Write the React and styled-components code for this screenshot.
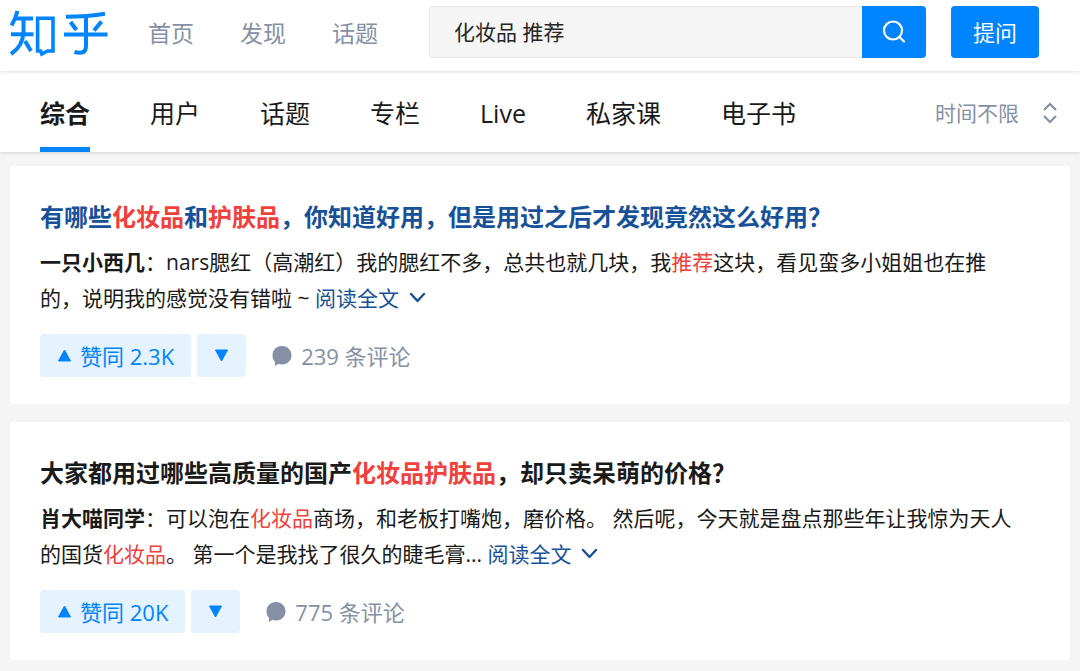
import React from "react";
import styled, { createGlobalStyle } from "styled-components";

const GlobalStyle = createGlobalStyle`
  * { box-sizing: border-box; }
  body {
    margin: 0;
    background: #f5f5f5;
    color: #1a1a1a;
    font-family: "Open Sans", "Noto Sans CJK SC", sans-serif;
    font-size: 21px;
    line-height: 36px;
  }
  button, input, select { font: inherit; }
  a { color: inherit; text-decoration: none; }
  svg { display: block; flex: none; }
`;

const Header = styled.header`
  position: relative;
  z-index: 1;
  display: flex;
  align-items: center;
  height: 71px;
  padding: 0 41px 7px 9px;
  background: #fff;
  box-shadow: 0 1px 3px rgba(26, 26, 26, 0.14);
`;

const LogoLink = styled.a`
  padding-top: 1px;
`;

const Nav = styled.nav`
  display: flex;
  gap: 46px;
  margin: 2px 51px 0 39px;
  font-size: 23px;
  color: #8590a6;
  white-space: nowrap;
`;

const SearchForm = styled.form`
  display: flex;
  flex: 1;
  min-width: 0;
  height: 52px;
`;

const SearchInput = styled.input`
  flex: 1;
  min-width: 0;
  padding: 0 24px;
  border: 1px solid #e8e8e8;
  border-right: 0;
  border-radius: 4px 0 0 4px;
  background: #f5f5f5;
  color: #262626;
  outline: none;
`;

const PrimaryButton = styled.button`
  display: flex;
  align-items: center;
  justify-content: center;
  width: ${(p) => p.$width}px;
  height: 52px;
  padding: 0;
  border: 0;
  border-radius: ${(p) => (p.$attached ? "0 4px 4px 0" : "4px")};
  background: #0084ff;
  color: #fff;
  font-size: 22px;
  cursor: pointer;
`;

const AskWrap = styled.div`
  margin-left: 25px;
`;

const TabBar = styled.div`
  display: flex;
  align-items: center;
  justify-content: space-between;
  height: 81px;
  padding: 0 22px 0 40px;
  background: #fff;
  box-shadow: 0 1px 3px rgba(26, 26, 26, 0.16);
`;

const Tabs = styled.nav`
  display: flex;
  gap: 60px;
  height: 81px;
  font-size: 25px;
  white-space: nowrap;
`;

const Tab = styled.a`
  padding-top: 24px;
  border-bottom: 5px solid ${(p) => (p.$active ? "#0084ff" : "transparent")};
  font-weight: ${(p) => (p.$active ? 700 : 400)};
`;

const TimeFilter = styled.label`
  display: flex;
  align-items: center;
  gap: 23px;
  padding-top: 2px;
  color: #8590a6;
`;

const TimeSelect = styled.select`
  appearance: none;
  height: 36px;
  padding: 0;
  border: 0;
  background: transparent;
  color: inherit;
`;

const Results = styled.main`
  display: flex;
  flex-direction: column;
  gap: 18px;
  padding: 14px 10px 11px;
`;

const Card = styled.article`
  padding: 29px 30px 27px;
  border-radius: 3px;
  background: #fff;
`;

const Title = styled.h2`
  margin: 0 0 5px;
  font-size: 24px;
  font-weight: 700;
  line-height: 44px;
  color: ${(p) => (p.$visited ? "#1a1a1a" : "#175199")};
`;

const Mark = styled.em`
  font-style: normal;
  color: #f1403c;
`;

const Excerpt = styled.p`
  margin: 0 0 18px;
  padding-right: 20px;
`;

const ReadMore = styled.a`
  display: inline-flex;
  align-items: center;
  gap: 10px;
  color: #175199;
  vertical-align: top;
`;

const Actions = styled.div`
  display: flex;
  align-items: center;
  gap: 6px;
  font-size: 22px;
`;

const VoteButton = styled.button`
  display: flex;
  align-items: center;
  gap: 8px;
  height: 43px;
  padding: 0 17px;
  border: 0;
  border-radius: 4px;
  background: #e5f2ff;
  color: #0084ff;
  cursor: pointer;
`;

const CommentButton = styled.button`
  display: flex;
  align-items: center;
  gap: 9px;
  margin-left: 20px;
  padding: 0;
  border: 0;
  background: transparent;
  color: #8590a6;
  cursor: pointer;
`;

const Logo = () => (
  <svg width="100" height="48" viewBox="9 8 100 48" fill="none" stroke="#0084ff" strokeWidth="4" role="img" aria-label="知乎">
    <path d="M17.5 10 Q15.5 18 11.5 24.5" />
    <path d="M15 17.5 H33" />
    <path d="M11 33.3 H33.5" />
    <path d="M23.5 17.5 V31 Q23 45 11 53" />
    <path d="M25 40 L31 50" />
    <path d="M37.6 17.3 H53 V50 H47.5 L41.8 53 L40.6 50 H37.6 Z" strokeWidth="3.6" />
    <path d="M66 15.8 Q88 15.6 105 12.8" />
    <path d="M70.5 21 L76.5 29" />
    <path d="M101.5 20.5 L94 29.5" />
    <path d="M64 33.5 H107.5" />
    <path d="M86 15 V45 Q86 51.7 80 51.7 Q77 51.7 74.5 51" />
  </svg>
);

const SearchIcon = () => (
  <svg width="24" height="24" viewBox="0 0 24 24" fill="none" stroke="#fff" strokeWidth="2.2" strokeLinecap="round" aria-hidden="true">
    <circle cx="11" cy="10.5" r="9" />
    <path d="M17.5 17 L22 21.5" />
  </svg>
);

const SortIcon = () => (
  <svg width="16" height="22" viewBox="0 0 16 22" fill="none" stroke="#8590a6" strokeWidth="2.2" aria-hidden="true">
    <path d="M2 8 L8 2 L14 8 M2 14 L8 20 L14 14" />
  </svg>
);

const ChevronIcon = () => (
  <svg width="17" height="12" viewBox="0 0 17 12" fill="none" stroke="#175199" strokeWidth="2.4" strokeLinecap="round" strokeLinejoin="round" aria-hidden="true">
    <path d="M2 2 L8.5 9 L15 2" />
  </svg>
);

const Triangle = ({ down }) => (
  <svg width="15" height="13" viewBox="0 0 15 13" fill="#0084ff" stroke="#0084ff" strokeLinejoin="round" aria-hidden="true">
    <path d={down ? "M1.5 1 H13.5 L7.5 12 Z" : "M1.5 12 H13.5 L7.5 1 Z"} />
  </svg>
);

const CommentIcon = () => (
  <svg width="20" height="20" viewBox="0 0 20 20" fill="#8590a6" aria-hidden="true">
    <path d="M10 0 C15.5 0 19.5 4 19.5 9.3 C19.5 14.7 15.5 18.4 10 18.4 C8.6 18.4 7.4 18.2 6.2 17.8 C5.2 18.9 3.6 19.8 2.6 19.6 C3.1 18.7 3.2 17.3 2.9 15.8 C1.3 14.2 0.5 12 0.5 9.3 C0.5 4 4.5 0 10 0 Z" />
  </svg>
);

const Result = ({ title, visited, votes, comments, children }) => (
  <Card>
    <Title $visited={visited}>
      <a href="#question">{title}</a>
    </Title>
    <Excerpt>
      {children}{" "}
      <ReadMore href="#full">
        阅读全文
        <ChevronIcon />
      </ReadMore>
    </Excerpt>
    <Actions>
      <VoteButton type="button">
        <Triangle />
        赞同 {votes}
      </VoteButton>
      <VoteButton type="button" aria-label="反对">
        <Triangle down />
      </VoteButton>
      <CommentButton type="button">
        <CommentIcon />
        {comments} 条评论
      </CommentButton>
    </Actions>
  </Card>
);

const TABS = ["综合", "用户", "话题", "专栏", "Live", "私家课", "电子书"];

export default function App() {
  return (
    <>
      <GlobalStyle />
      <Header>
        <LogoLink href="#home">
          <Logo />
        </LogoLink>
        <Nav>
          <a href="#index">首页</a>
          <a href="#explore">发现</a>
          <a href="#topics">话题</a>
        </Nav>
        <SearchForm role="search" onSubmit={(e) => e.preventDefault()}>
          <SearchInput type="text" aria-label="搜索" defaultValue="化妆品 推荐" />
          <PrimaryButton type="submit" $width={64} $attached aria-label="搜索">
            <SearchIcon />
          </PrimaryButton>
        </SearchForm>
        <AskWrap>
          <PrimaryButton type="button" $width={88}>提问</PrimaryButton>
        </AskWrap>
      </Header>
      <TabBar>
        <Tabs>
          {TABS.map((name, i) => (
            <Tab key={name} href="#results" $active={i === 0}>{name}</Tab>
          ))}
        </Tabs>
        <TimeFilter>
          <TimeSelect aria-label="时间">
            <option>时间不限</option>
          </TimeSelect>
          <SortIcon />
        </TimeFilter>
      </TabBar>
      <Results>
        <Result
          title={<>有哪些<Mark>化妆品</Mark>和<Mark>护肤品</Mark>，你知道好用，但是用过之后才发现竟然这么好用？</>}
          votes="2.3K"
          comments="239"
        >
          <b>一只小西几</b>：nars腮红（高潮红）我的腮红不多，总共也就几块，我<Mark>推荐</Mark>这块，看见蛮多小姐姐也在推的，说明我的感觉没有错啦 ~
        </Result>
        <Result
          title={<>大家都用过哪些高质量的国产<Mark>化妆品护肤品</Mark>，却只卖呆萌的价格？</>}
          visited
          votes="20K"
          comments="775"
        >
          <b>肖大喵同学</b>：可以泡在<Mark>化妆品</Mark>商场，和老板打嘴炮，磨价格。 然后呢，今天就是盘点那些年让我惊为天人的国货<Mark>化妆品</Mark>。 第一个是我找了很久的睫毛膏...
        </Result>
      </Results>
    </>
  );
}
